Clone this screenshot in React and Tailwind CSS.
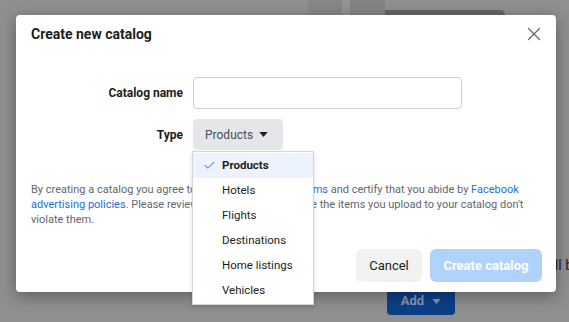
import { Check, X } from "lucide-react";

const types = ["Products", "Hotels", "Flights", "Destinations", "Home listings", "Vehicles"];

function Caret({ className }) {
  return (
    <svg viewBox="0 0 10 6" className={className} fill="currentColor">
      <path d="M0 0h10L5 6z" />
    </svg>
  );
}

function TypeMenu() {
  return (
    <div className="absolute left-[-1px] top-[calc(100%+1px)] z-10 w-[122px] border border-[#d4d6da] bg-white py-px shadow-[0_2px_4px_rgba(0,0,0,0.15)]">
      {types.map((t, i) => (
        <div
          key={t}
          className={`flex h-[25px] items-center text-[11.5px] text-[#1c1e21] ${
            i === 0 ? "bg-[#ecf3fe] font-bold" : ""
          }`}
        >
          <span className="flex w-[29px] justify-end pr-[6px]">
            {i === 0 && <Check size={13} strokeWidth={2} className="text-[#8d949e]" />}
          </span>
          {t}
        </div>
      ))}
    </div>
  );
}

export default function App() {
  return (
    <div className="relative h-[322px] w-[569px] overflow-hidden bg-[#8f8f8f] font-['Roboto',sans-serif]">
      {/* dimmed page behind the dialog */}
      <div className="flex h-[15px] pl-[308px]">
        <div className="h-full w-[34px] bg-[#878787]" />
        <div className="h-full w-[8px] bg-[#939393]" />
        <div className="h-full w-[35px] bg-[#848484]" />
      </div>
      <div className="ml-[345px] mt-[-5px] h-[5px] w-[160px] rounded-t-[6px] bg-[#676560]" />
      <div className="mt-[242px] flex h-[16px] items-center justify-end text-[14px] text-[#1f1f1f]">
        <span className="mr-[-4px]">ll b</span>
      </div>
      <div className="ml-[387px] mt-[14px] flex h-[28px] w-[68px] items-center justify-center gap-[8px] rounded-[4px] bg-[#0d3f89] text-[13px] font-bold text-[#8797b2]">
        Add
        <Caret className="h-[5px] w-[9px]" />
      </div>

      {/* dialog */}
      <div className="absolute left-[16px] top-[15px] h-[277px] w-[540px] rounded-[4px] bg-white shadow-[0_4px_16px_rgba(0,0,0,0.35)]">
        <div className="flex h-[29px] items-end justify-between px-[15px]">
          <h2 className="text-[14px] font-bold leading-[20px] text-[#1c1e21]">Create new catalog</h2>
          <X size={22} strokeWidth={1.3} className="mr-[-4px] mb-[-1px] text-[#606770]" />
        </div>

        <div className="mt-[33px] grid grid-cols-[167px_269px] items-center gap-x-[10px] gap-y-[10px]">
          <label className="text-right text-[12px] font-bold text-[#1c1e21]">Catalog name</label>
          <input className="h-[32px] rounded-[4px] border border-[#ccd0d5] px-2 text-[12px] outline-none" />
          <label className="text-right text-[12px] font-bold text-[#1c1e21]">Type</label>
          <div className="relative w-fit">
            <button className="flex h-[31px] w-[90px] items-center gap-[6px] rounded-[4px] bg-[#e4e6e9] pl-[12px] text-[12px] text-[#4b4f56]">
              Products
              <Caret className="h-[5px] w-[9px] text-[#1c1e21]" />
            </button>
            <TypeMenu />
          </div>
        </div>

        <p className="mt-[32px] px-[15px] text-[11px] leading-[15px] text-[#606770]">
          By creating a catalog you agree to{" "}
          <span className="text-[#216fdb]">Facebook's Catalog Terms</span> and certify that you abide by{" "}
          <span className="text-[#216fdb]">Facebook advertising policies</span>. Please review these policies to
          ensure the items you upload to your catalog don't violate them.
        </p>

        <div className="absolute bottom-[10px] right-[14px] flex gap-[8px]">
          <button className="h-[33px] w-[66px] rounded-[6px] bg-[#f2f2f2] text-[13px] text-[#1c1e21]">Cancel</button>
          <button className="h-[33px] w-[112px] rounded-[6px] bg-[#b0d3fb] text-[13px] font-bold text-white">
            Create catalog
          </button>
        </div>
      </div>
    </div>
  );
}
